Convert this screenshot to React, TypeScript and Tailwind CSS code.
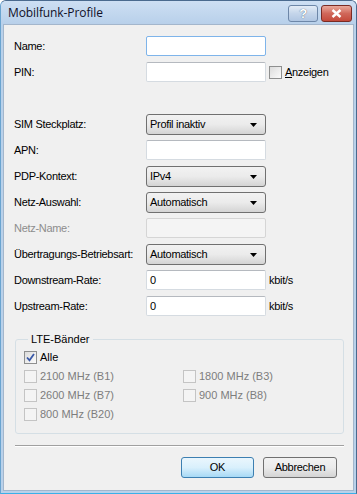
import React from "react";

const font = { fontFamily: '"Liberation Sans", Arial, sans-serif' };

function TextBox({ value = "", focused = false, disabled = false }: { value?: string; focused?: boolean; disabled?: boolean }) {
  return (
    <div
      className={
        "h-[20px] w-[120px] rounded-[2px] border px-[3px] flex items-center " +
        (focused
          ? "border-[#7eb4ea] bg-white"
          : disabled
          ? "border-[#d5d5d5] bg-[#f4f4f4]"
          : "border-[#d5dbe1] border-t-[#b5b9bf] bg-white")
      }
    >
      {value}
    </div>
  );
}

function Select({ value }: { value: string }) {
  return (
    <div className="h-[21px] w-[120px] rounded-[3px] border border-[#707070] bg-gradient-to-b from-[#f2f2f2] via-[#ebebeb] to-[#d4d4d4] flex items-center justify-between pl-[3px] pr-[8px] text-black">
      <span>{value}</span>
      <svg width="7" height="4" viewBox="0 0 7 4">
        <path d="M0 0h7L3.5 4z" fill="#000" />
      </svg>
    </div>
  );
}

function Check({ checked = false, disabled = false }: { checked?: boolean; disabled?: boolean }) {
  return (
    <div
      className={
        "h-[13px] w-[13px] border flex items-center justify-center " +
        (disabled ? "border-[#c4c4c4] bg-[#f4f4f4]" : "border-[#8e8f8f] bg-gradient-to-br from-[#dcdcdc] to-[#fbfbfb]")
      }
    >
      {checked && (
        <svg width="9" height="9" viewBox="0 0 9 9">
          <path d="M1 4.5l2.5 2.8L8 1" stroke="#3a59a8" strokeWidth="1.8" fill="none" />
        </svg>
      )}
    </div>
  );
}

function Row({ label, disabled = false, children }: { label: string; disabled?: boolean; children: React.ReactNode }) {
  return (
    <div className="h-[26px] flex items-start">
      <div className={"h-[20px] w-[132px] whitespace-nowrap flex items-center " + (disabled ? "text-[#8d8d8d]" : "text-black")}>
        {label}
      </div>
      {children}
    </div>
  );
}

function Band({ label }: { label: string }) {
  return (
    <div className="h-[19px] flex items-center gap-[3px] text-[#7d7d7d]">
      <Check disabled />
      <span>{label}</span>
    </div>
  );
}

export default function App() {
  return (
    <div
      style={font}
      className="w-[357px] h-[494px] flex flex-col bg-[#b9d1ea] border border-[#4a6a8e] border-b-[#3ab0e8] border-l-[#6aa4d0] rounded-t-[6px] overflow-hidden text-[11px] tracking-[-0.3px]"
    >
      <div className="h-[23px] flex items-center justify-between pl-[7px] pr-[4px] bg-gradient-to-b from-[#cddff3] to-[#b8d0ea]">
        <span
          className="text-[12px] tracking-[-0.1px] text-[#101028]"
          style={{ fontFamily: '"Open Sans", "Liberation Sans", sans-serif' }}
        >
          Mobilfunk-Profile
        </span>
        <div className="flex items-center gap-[3px] self-start pt-[4px]">
          <div className="h-[17px] w-[30px] rounded-[3px] border border-[#6d87a8] bg-gradient-to-b from-[#e3ecf6] via-[#c4d5ea] to-[#b0c6e2] flex items-center justify-center text-[13px] font-bold text-white [text-shadow:0_0_1px_#2b3f58]">
            ?
          </div>
          <div className="h-[17px] w-[31px] rounded-[3px] border border-[#7a2b24] bg-gradient-to-b from-[#e9a99c] via-[#d0675a] to-[#c4493a] flex items-center justify-center">
            <svg width="11" height="9" viewBox="0 0 11 9">
              <path d="M1.5 1l8 7M9.5 1l-8 7" stroke="#fff" strokeWidth="2.4" />
            </svg>
          </div>
        </div>
      </div>
      <div className="flex-1 mx-[2px] mb-[2px] bg-[#f0f0f0] border border-[#a3b6cc] flex flex-col pl-[10px] pr-[9px] pt-[11px]">
        <Row label="Name:">
          <TextBox focused />
        </Row>
        <Row label="PIN:">
          <TextBox />
          <div className="ml-[3px] h-[20px] flex items-center gap-[3px]">
            <Check />
            <span>
              <span className="underline">A</span>nzeigen
            </span>
          </div>
        </Row>
        <div className="h-[26px]" />
        <Row label="SIM Steckplatz:">
          <Select value="Profil inaktiv" />
        </Row>
        <Row label="APN:">
          <TextBox />
        </Row>
        <Row label="PDP-Kontext:">
          <Select value="IPv4" />
        </Row>
        <Row label="Netz-Auswahl:">
          <Select value="Automatisch" />
        </Row>
        <Row label="Netz-Name:" disabled>
          <TextBox disabled />
        </Row>
        <Row label="Übertragungs-Betriebsart:">
          <Select value="Automatisch" />
        </Row>
        <Row label="Downstream-Rate:">
          <TextBox value="0" />
          <span className="ml-[3px] h-[20px] flex items-center">kbit/s</span>
        </Row>
        <Row label="Upstream-Rate:">
          <TextBox value="0" />
          <span className="ml-[3px] h-[20px] flex items-center">kbit/s</span>
        </Row>
        <fieldset className="mt-[10px] ml-[1px] w-[329px] border border-[#d5dfe5] rounded-[3px] pl-[8px] pb-[9px] pt-[2px] tracking-normal">
          <legend className="ml-[4px] px-[3px] text-black leading-[14px]">LTE-Bänder</legend>
          <div className="h-[19px] flex items-center gap-[3px]">
            <Check checked />
            <span>Alle</span>
          </div>
          <div className="grid grid-cols-[159px_1fr]">
            <Band label="2100 MHz (B1)" />
            <Band label="1800 MHz (B3)" />
            <Band label="2600 MHz (B7)" />
            <Band label="900 MHz (B8)" />
            <Band label="800 MHz (B20)" />
          </div>
        </fieldset>
        <div className="mt-[11px] ml-[1px] w-[329px] border-t border-t-[#a0a0a0] border-b border-b-white" />
        <div className="mt-[10px] flex justify-end gap-[9px] pr-[7px]">
          <div className="h-[21px] w-[73px] rounded-[3px] border border-[#3c7fb1] bg-gradient-to-b from-[#eaf6fd] via-[#d9f0fc] to-[#a7d9f5] flex items-center justify-center">
            OK
          </div>
          <div className="h-[21px] w-[74px] rounded-[3px] border border-[#707070] bg-gradient-to-b from-[#f2f2f2] via-[#ebebeb] to-[#d4d4d4] flex items-center justify-center">
            Abbrechen
          </div>
        </div>
      </div>
    </div>
  );
}
